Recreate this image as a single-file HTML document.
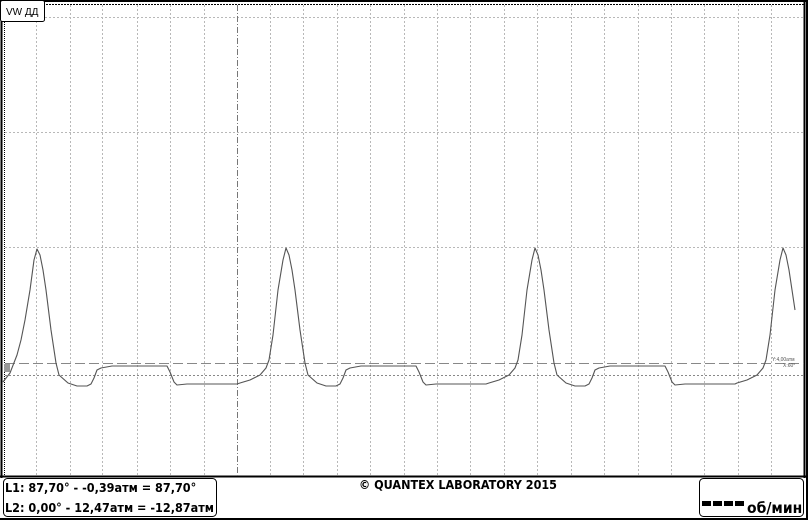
<!DOCTYPE html>
<html><head><meta charset="utf-8"><style>
html,body{margin:0;padding:0;background:#fff;width:808px;height:520px;overflow:hidden}
svg{display:block}
.t{font-family:"DejaVu Sans Condensed","Liberation Sans Narrow","Liberation Sans",sans-serif;font-weight:bold}
</style></head><body>
<svg width="808" height="520" viewBox="0 0 808 520" xmlns="http://www.w3.org/2000/svg">
<rect width="808" height="520" fill="#fff"/>
<line x1="1.5" y1="0" x2="1.5" y2="478" stroke="#000" stroke-width="2"/>
<line x1="4.5" y1="4" x2="4.5" y2="476" stroke="#000" stroke-width="1" stroke-dasharray="1,1"/>
<line x1="804.5" y1="0" x2="804.5" y2="478" stroke="#000" stroke-width="2"/>
<line x1="807" y1="0" x2="807" y2="520" stroke="#000" stroke-width="2"/>
<line x1="0" y1="1" x2="808" y2="1" stroke="#000" stroke-width="2"/>
<line x1="4" y1="4.5" x2="804" y2="4.5" stroke="#000" stroke-width="1" stroke-dasharray="2,1"/>
<line x1="0" y1="476.5" x2="808" y2="476.5" stroke="#000" stroke-width="2"/>
<line x1="0" y1="519" x2="808" y2="519" stroke="#000" stroke-width="2"/>
<g stroke="#b8b8b8" stroke-width="1" stroke-dasharray="2,2">
<line x1="5" y1="17.5" x2="804" y2="17.5"/>
<line x1="5" y1="132.5" x2="804" y2="132.5"/>
<line x1="5" y1="247.5" x2="804" y2="247.5"/>
<line x1="5" y1="375.5" x2="804" y2="375.5" stroke="#888"/>
<line x1="36.5" y1="5" x2="36.5" y2="476"/>
<line x1="70.5" y1="5" x2="70.5" y2="476"/>
<line x1="102.5" y1="5" x2="102.5" y2="476"/>
<line x1="137.5" y1="5" x2="137.5" y2="476"/>
<line x1="170.5" y1="5" x2="170.5" y2="476"/>
<line x1="204.5" y1="5" x2="204.5" y2="476"/>
<line x1="270.5" y1="5" x2="270.5" y2="476"/>
<line x1="303.5" y1="5" x2="303.5" y2="476"/>
<line x1="337.5" y1="5" x2="337.5" y2="476"/>
<line x1="370.5" y1="5" x2="370.5" y2="476"/>
<line x1="404.5" y1="5" x2="404.5" y2="476"/>
<line x1="437.5" y1="5" x2="437.5" y2="476"/>
<line x1="470.5" y1="5" x2="470.5" y2="476"/>
<line x1="504.5" y1="5" x2="504.5" y2="476"/>
<line x1="537.5" y1="5" x2="537.5" y2="476"/>
<line x1="571.5" y1="5" x2="571.5" y2="476"/>
<line x1="604.5" y1="5" x2="604.5" y2="476"/>
<line x1="638.5" y1="5" x2="638.5" y2="476"/>
<line x1="671.5" y1="5" x2="671.5" y2="476"/>
<line x1="704.5" y1="5" x2="704.5" y2="476"/>
<line x1="738.5" y1="5" x2="738.5" y2="476"/>
<line x1="771.5" y1="5" x2="771.5" y2="476"/>
</g>
<line x1="237.5" y1="5" x2="237.5" y2="476" stroke="#777" stroke-dasharray="6,2,1,2"/>
<line x1="5" y1="363.5" x2="804" y2="363.5" stroke="#888" stroke-dasharray="10,4"/>
<polyline fill="none" stroke="#555" stroke-width="1.1" stroke-linejoin="round" points="3,382 10,373 17,355 21,340 25,320 30,290 34,260 37,249 40,255 43,270 46,290 51,330 56,363 59,375 68,383 77,386 87,386 91,384 94,378 97,370 101,368 112,366 167,366 170,372 174,382 177,385 187,384 237,384 240,383 250,380 260,375 266,368 269,360 273,335 278,290 283,260 286,248 289,255 292,270 295,290 300,330 305,363 308,375 317,383 326,386 336,386 340,384 343,378 346,370 350,368 361,366 416,366 419,372 423,382 426,385 436,384 486,384 489,383 499,380 509,375 515,368 518,360 522,335 527,290 532,260 535,248 538,255 541,270 544,290 549,330 554,363 557,375 566,383 575,386 585,386 589,384 592,378 595,370 599,368 610,366 665,366 668,372 672,382 675,385 685,384 735,384 737,383 747,380 757,375 763,368 766,360 770,335 775,290 780,260 783,248 786,255 789,270 792,290 795,310"/>
<rect x="4" y="364" width="6" height="8" fill="#999"/>
<text x="772" y="361" font-family="Liberation Sans,sans-serif" font-size="5" fill="#555">Y:4,00атм</text>
<text x="783" y="367" font-family="Liberation Sans,sans-serif" font-size="5" fill="#555">X:60°</text>
<rect x="0.5" y="0.5" width="44" height="21" rx="2" fill="#fff" stroke="#000"/>
<text x="6" y="15" font-family="Liberation Sans,sans-serif" font-size="10" fill="#000">VW ДД</text>
<rect x="3.5" y="478.5" width="213" height="38" rx="4" fill="#fff" stroke="#000"/>
<text class="t" x="5" y="492" font-size="12.5" fill="#000">L1: 87,70° - -0,39атм = 87,70°</text>
<text class="t" x="5" y="512" font-size="12.5" fill="#000">L2: 0,00° - 12,47атм = -12,87атм</text>
<text class="t" x="359" y="489" font-size="12.5" fill="#000" textLength="198" lengthAdjust="spacingAndGlyphs">© QUANTEX LABORATORY 2015</text>
<rect x="699.5" y="478.5" width="104" height="38" rx="4" fill="#fff" stroke="#000"/>
<g fill="#000"><rect x="702" y="501" width="9" height="5"/><rect x="713" y="501" width="9" height="5"/><rect x="724" y="501" width="9" height="5"/><rect x="735" y="501" width="9" height="5"/></g>
<text class="t" x="747" y="513" font-size="15.5" fill="#000">об/мин</text>
</svg>
</body></html>
